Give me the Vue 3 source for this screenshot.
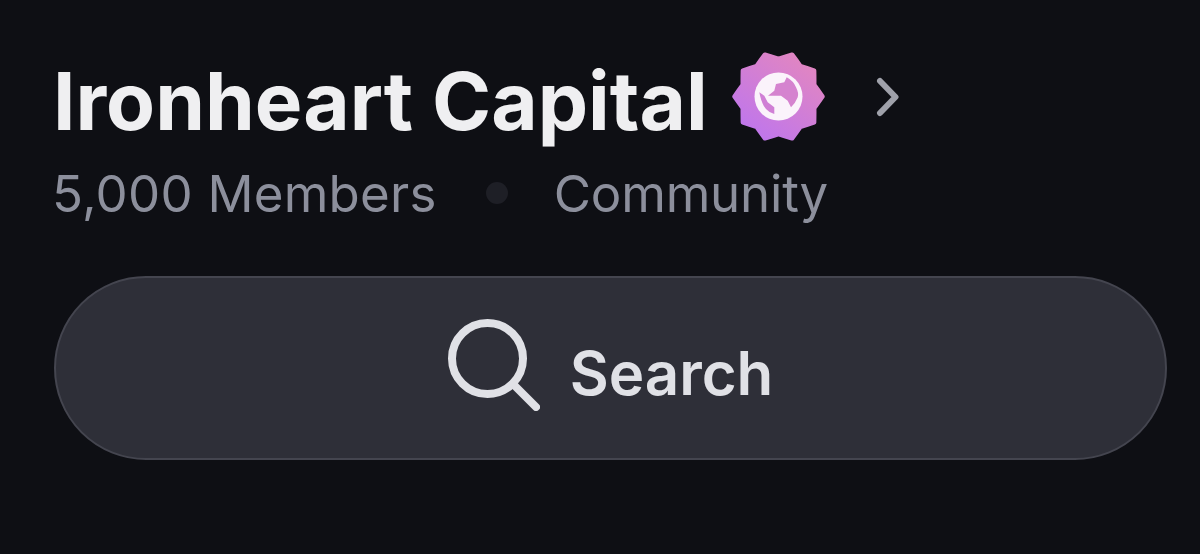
<script setup>
// wavy 10-point seal for the community badge
const cx = 46.5, cy = 45.5
function sealPath(tip, valley, lobes) {
  const step = (Math.PI * 2) / lobes
  const pt = (r, a) => `${(cx + r * Math.sin(a)).toFixed(1)} ${(cy - r * Math.cos(a)).toFixed(1)}`
  let d = ''
  for (let i = 0; i < lobes; i++) {
    const tipAngle = step * (i + 0.5)
    const next = step * (i + 1)
    d += `${i ? '' : 'M' + pt(valley, 0)} `
    // concave flank up to the tip, then back down into the next valley
    d += `Q${pt(valley + 2.5, tipAngle - step * 0.26)} ${pt(tip, tipAngle)} `
    d += `Q${pt(valley + 2.5, tipAngle + step * 0.26)} ${pt(valley, next)} `
  }
  return d + 'Z'
}
const seal = sealPath(44, 37.5, 10)
</script>

<template>
  <div class="page">
    <div class="title-row">
      <h1 class="title">Ironheart Capital</h1>
      <svg class="badge" width="94" height="92" viewBox="0 0 94 92">
        <defs>
          <linearGradient id="sealFill" x1="1" y1="0" x2="0.25" y2="1">
            <stop offset="0" stop-color="#e688bb" />
            <stop offset="1" stop-color="#bf76ec" />
          </linearGradient>
        </defs>
        <path :d="seal" fill="url(#sealFill)" stroke="url(#sealFill)" stroke-width="4.5" stroke-linejoin="round" />
        <circle cx="46.5" cy="45.5" r="24" fill="#fbf3fb" />
        <path d="M36 44.7 L42.3 39.7 L44 33 L52.3 31.3 L54.7 26.3 Q61.5 30 64 36.3 Q67 42 65.7 46.3 Q63.5 52 59 56.3 L55.7 49.7 L49 44.7Z" fill="#d583cf" />
        <path d="M27.3 41.3 L32.3 44.7 L35.7 51.3 L42.3 56.3 L42.3 63 Q37 61.5 34 58 Q29.5 53 27.3 41.3Z" fill="#d07fd5" />
      </svg>
      <svg class="chevron" width="24" height="40" viewBox="0 0 24 40">
        <path d="M4 4 L19.5 20 L4 36" fill="none" stroke="#9fa1aa" stroke-width="6" stroke-linecap="round" stroke-linejoin="round" />
      </svg>
    </div>

    <div class="meta">
      <span class="members">5,000 Members</span>
      <span class="dot"></span>
      <span class="kind">Community</span>
    </div>

    <button type="button" class="search">
      <svg class="search-icon" width="92" height="92" viewBox="0 0 92 92">
        <circle cx="39.5" cy="39.5" r="35.5" fill="none" stroke="#e0e1e6" stroke-width="8" />
        <path d="M65 65 L88 88" fill="none" stroke="#e0e1e6" stroke-width="8" stroke-linecap="round" />
      </svg>
      <span>Search</span>
    </button>
  </div>
</template>

<style>
html, body { background: #0e0f14; }
</style>

<style scoped>
.page {
  width: 1200px;
  height: 554px;
  box-sizing: border-box;
  padding: 50px 33px 0 53px;
  background: #0e0f14;
  font-family: Inter, "Liberation Sans", sans-serif;
  overflow: hidden;
}
.title-row { display: flex; align-items: center; height: 94px; }
.title {
  margin: 0;
  font-size: 80px;
  font-weight: 700;
  line-height: 94px;
  color: #efeff1;
  white-space: nowrap;
  position: relative;
  top: 4px;
}
.badge { margin-left: 24px; }
.chevron { margin-left: 50px; }
.meta {
  display: flex;
  align-items: center;
  height: 60px;
  margin: 19px 0 0 -1px;
  font-size: 51px;
  color: #8c8f9c;
}
.members { letter-spacing: 0.25px; }
.kind { letter-spacing: -0.2px; }
.dot {
  width: 22px;
  height: 22px;
  margin: 0 46px 0 49px;
  border-radius: 50%;
  background: #1e1f26;
}
.search {
  display: flex;
  align-items: center;
  justify-content: center;
  gap: 30px;
  width: calc(100% - 1px);
  height: 184px;
  margin: 53px 0 0 1px;
  border: 2px solid #44454f;
  border-radius: 92px;
  background: #2e2f38;
  color: #e0e1e6;
  font-family: inherit;
  font-size: 60px;
  font-weight: 600;
}
.search span { position: relative; top: 5px; }
.search-icon { position: relative; top: -3px; }
</style>
